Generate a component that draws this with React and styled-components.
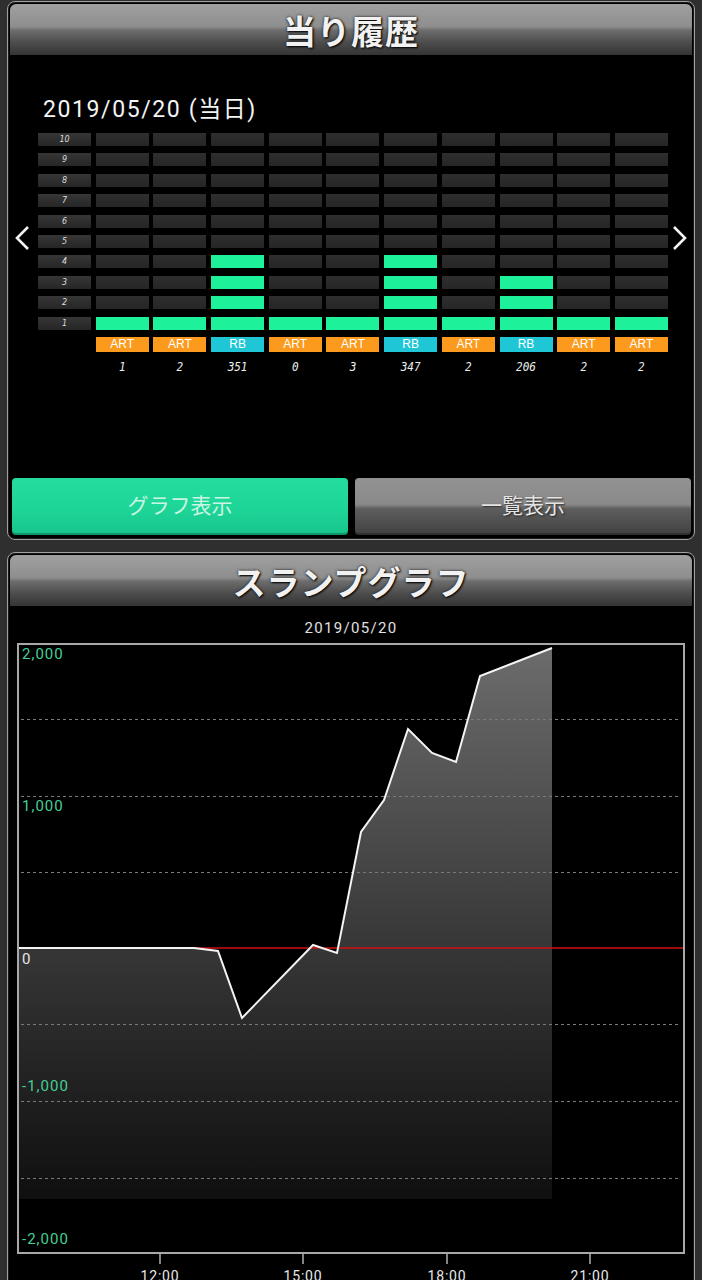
import React from "react";
import styled, { createGlobalStyle } from "styled-components";

const GlobalStyle = createGlobalStyle`
  body {
    margin: 0;
    background: #2f2f2f;
    font-family: "Roboto", "Noto Sans CJK JP", sans-serif;
    color: #fff;
  }
`;

const Page = styled.div`
  display: flex;
  flex-direction: column;
  gap: 12px;
  padding-top: 1px;
  width: 702px;
`;

const Panel = styled.section`
  margin: 0 7px;
  border: 1px solid #a0a0a0;
  border-radius: 8px;
  padding: 2px 2px 4px;
  background: #000;
  box-shadow: inset 0 0 0 1px #1a1a1a;
`;

const Header = styled.header`
  height: 51px;
  border-radius: 6px 6px 0 0;
  background: linear-gradient(
    to bottom,
    #a0a0a0 0%,
    #8e8e8e 44%,
    #6c6c6c 52%,
    #4c4c4c 76%,
    #343434 100%
  );
  display: flex;
  align-items: center;
  justify-content: center;
  font-family: "Noto Sans CJK JP", sans-serif;
  font-weight: 700;
  font-size: 33px;
  letter-spacing: 1px;
  color: #f2f2f2;
  text-shadow: 1px 1px 2px #000, 0 0 3px #222;
`;

const Body = styled.div`
  height: 423px;
  box-sizing: border-box;
  padding: 42px 4px 0 4px;
  display: flex;
  align-items: flex-start;
`;

const Arrow = styled.svg`
  width: 16px;
  height: 26px;
  margin-top: 128px;
  flex: none;
`;

const GridWrap = styled.div`
  display: flex;
  flex-direction: column;
  margin: 0 4px 0 8px;
`;

const DateLabel = styled.div`
  margin: 0 0 10px 5px;
  font-size: 23px;
  line-height: 26px;
  letter-spacing: 1.6px;
  color: #f4f4f4;
`;

const Grid = styled.div`
  display: grid;
  grid-template-columns: repeat(11, 53px);
  grid-template-rows: repeat(10, 13px) 15px 14px;
  column-gap: 4.7px;
  row-gap: 7.4px;
`;

const RowLabel = styled.div`
  background: linear-gradient(to bottom, #363636, #262626);
  display: flex;
  align-items: center;
  justify-content: center;
  font-family: "DejaVu Sans", sans-serif;
  font-style: italic;
  font-size: 8px;
  color: #ddd;
`;

const Cell = styled.div`
  background: ${(p) =>
    p.$on ? "#1df29b" : "linear-gradient(to bottom, #2e2e2e, #262626)"};
`;

const TypeTag = styled.div`
  background: ${(p) => (p.$type === "RB" ? "#1fc6d6" : "#fb9a1c")};
  color: #fff;
  font-family: "Liberation Sans", sans-serif;
  font-size: 12px;
  line-height: 15px;
  text-align: center;
`;

const Count = styled.div`
  font-family: "DejaVu Sans Mono", monospace;
  font-style: italic;
  font-size: 11px;
  line-height: 14px;
  color: #eee;
  text-align: center;
  transform: translateY(2px) scaleY(1.1);
`;

const ButtonRow = styled.div`
  display: flex;
  gap: 7px;
  padding: 0 0 0 2px;
`;

const TabButton = styled.div`
  width: 336px;
  height: 57px;
  box-sizing: border-box;
  padding-bottom: 5px;
  border-radius: 4px;
  display: flex;
  align-items: center;
  justify-content: center;
  font-family: "Noto Sans CJK JP", sans-serif;
  font-size: 21px;
  background: ${(p) =>
    p.$active
      ? "linear-gradient(to bottom, #25dc9f 0%, #1fd699 50%, #16c58b 100%)"
      : "linear-gradient(to bottom, #929292 0%, #8a8a8a 46%, #5e5e5e 54%, #404040 100%)"};
  color: ${(p) => (p.$active ? "#c9f5e2" : "#e4e4e4")};
  text-shadow: ${(p) => (p.$active ? "none" : "1px 1px 2px #222")};
  box-shadow: inset 0 -2px 0 rgba(0, 0, 0, 0.25);
`;

const SubTitle = styled.div`
  height: 37px;
  box-sizing: border-box;
  padding-top: 13px;
  font-size: 15px;
  line-height: 18px;
  letter-spacing: 1.3px;
  text-align: center;
  color: #e0e0e0;
`;

const ChartWrap = styled.div`
  margin: 0 7px;
  display: flex;
  flex-direction: column;
`;

const Chart = styled.svg`
  display: block;
  width: 668px;
  height: 611px;
`;

const Axis = styled.svg`
  display: block;
  width: 668px;
  height: 32px;
`;

const bars = [1, 1, 4, 1, 1, 4, 1, 3, 1, 1];
const types = ["ART", "ART", "RB", "ART", "ART", "RB", "ART", "RB", "ART", "ART"];
const counts = ["1", "2", "351", "0", "3", "347", "2", "206", "2", "2"];

const points = [
  [0, 305],
  [177, 305],
  [201, 308],
  [225, 375],
  [296, 302],
  [320, 310],
  [344, 189],
  [367, 157],
  [391, 86],
  [415, 110],
  [439, 119],
  [463, 33],
  [535, 5],
];

const gridLines = [76, 153, 229, 381, 458, 535];

const yLabels = [
  { y: 11, text: "2,000", color: "#45cf95" },
  { y: 163, text: "1,000", color: "#45cf95" },
  { y: 316, text: "0", color: "#e6e6e6" },
  { y: 443, text: "-1,000", color: "#45cf95" },
  { y: 596, text: "-2,000", color: "#45cf95" },
];

const xTicks = [
  { x: 143, text: "12:00" },
  { x: 286, text: "15:00" },
  { x: 430, text: "18:00" },
  { x: 573, text: "21:00" },
];

const SlumpChart = () => {
  const line = points.map((p) => p.join(",")).join(" ");
  const area = `${line} 535,556 0,556`;
  return (
    <ChartWrap>
      <Chart viewBox="0 0 668 611">
        <defs>
          <linearGradient id="fillGrad" gradientUnits="userSpaceOnUse" x1="0" y1="5" x2="0" y2="556">
            <stop offset="0" stopColor="#6c6c6c" />
            <stop offset="0.55" stopColor="#363636" />
            <stop offset="1" stopColor="#0f0f0f" />
          </linearGradient>
        </defs>
        <rect x="0" y="0" width="668" height="611" fill="#000" />
        <polygon points={area} fill="url(#fillGrad)" />
        {gridLines.map((y) => (
          <line
            key={y}
            x1="4"
            x2="664"
            y1={y + 0.5}
            y2={y + 0.5}
            stroke="#7a7a7a"
            strokeWidth="1"
            strokeDasharray="3 3"
          />
        ))}
        <line x1="2" x2="666" y1="305" y2="305" stroke="#d01010" strokeWidth="1.6" />
        <polyline points={line} fill="none" stroke="#f4f4f4" strokeWidth="2" strokeLinejoin="miter" />
        {yLabels.map((l) => (
          <text
            key={l.text}
            x="5"
            y={l.y + 5}
            fill={l.color}
            fontSize="15"
            letterSpacing="1"
            fontFamily="Roboto, sans-serif"
          >
            {l.text}
          </text>
        ))}
        <rect x="1" y="1" width="666" height="609" fill="none" stroke="#a8a8a8" strokeWidth="2" />
      </Chart>
      <Axis viewBox="0 0 668 32">
        {xTicks.map((t) => (
          <g key={t.text}>
            <line x1={t.x} x2={t.x} y1="0" y2="10" stroke="#b0b0b0" strokeWidth="1.5" />
            <text
              x={t.x}
              y="27"
              fill="#e8e8e8"
              fontSize="14"
              letterSpacing="0.8"
              textAnchor="middle"
              fontFamily="Roboto, sans-serif"
            >
              {t.text}
            </text>
          </g>
        ))}
      </Axis>
    </ChartWrap>
  );
};

const HitHistory = () => (
  <Panel>
    <Header>当り履歴</Header>
    <Body>
      <Arrow viewBox="0 0 16 26">
        <polyline points="14,2 3,13 14,24" fill="none" stroke="#f2f2f2" strokeWidth="2.6" />
      </Arrow>
      <GridWrap>
        <DateLabel>2019/05/20 (当日)</DateLabel>
        <Grid>
          {Array.from({ length: 10 }, (_, i) => 10 - i).map((level) => (
            <React.Fragment key={level}>
              <RowLabel>{level}</RowLabel>
              {bars.map((v, c) => (
                <Cell key={c} $on={v >= level} />
              ))}
            </React.Fragment>
          ))}
          <div />
          {types.map((t, i) => (
            <TypeTag key={i} $type={t}>
              {t}
            </TypeTag>
          ))}
          <div />
          {counts.map((n, i) => (
            <Count key={i}>{n}</Count>
          ))}
        </Grid>
      </GridWrap>
      <Arrow viewBox="0 0 16 26">
        <polyline points="2,2 13,13 2,24" fill="none" stroke="#f2f2f2" strokeWidth="2.6" />
      </Arrow>
    </Body>
    <ButtonRow>
      <TabButton $active>グラフ表示</TabButton>
      <TabButton>一覧表示</TabButton>
    </ButtonRow>
  </Panel>
);

const App = () => (
  <>
    <GlobalStyle />
    <Page>
      <HitHistory />
      <Panel>
        <Header>スランプグラフ</Header>
        <SubTitle>2019/05/20</SubTitle>
        <SlumpChart />
      </Panel>
    </Page>
  </>
);

export default App;
